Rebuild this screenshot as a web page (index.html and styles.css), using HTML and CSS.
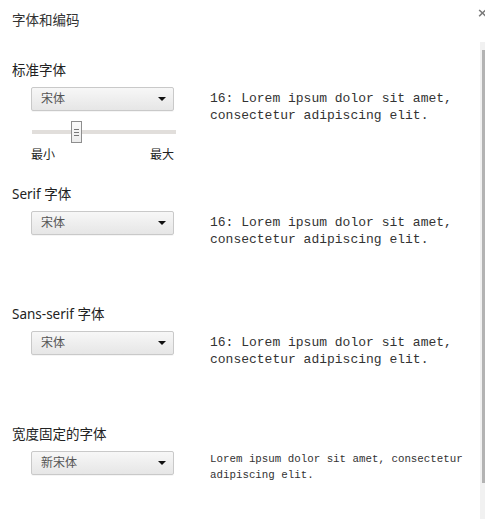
FILE: index.html
```html
<!DOCTYPE html>
<html>
<head>
<meta charset="utf-8">
<link rel="stylesheet" href="styles.css">
</head>
<body>
<div class="page">
  <div class="title">字体和编码</div>

  <div class="section first">
    <div class="label">标准字体</div>
    <div class="row">
      <div class="controls">
        <div class="select"><span>宋体</span><i class="arrow"></i></div>
        <div class="slider">
          <div class="track"></div>
          <div class="thumb"><span></span><span></span><span></span></div>
        </div>
        <div class="scale"><span>最小</span><span>最大</span></div>
      </div>
      <div class="preview">16: Lorem ipsum dolor sit amet,<br>consectetur adipiscing elit.</div>
    </div>
  </div>

  <div class="section">
    <div class="label">Serif 字体</div>
    <div class="row">
      <div class="controls">
        <div class="select"><span>宋体</span><i class="arrow"></i></div>
      </div>
      <div class="preview">16: Lorem ipsum dolor sit amet,<br>consectetur adipiscing elit.</div>
    </div>
  </div>

  <div class="section">
    <div class="label">Sans-serif 字体</div>
    <div class="row">
      <div class="controls">
        <div class="select"><span>宋体</span><i class="arrow"></i></div>
      </div>
      <div class="preview">16: Lorem ipsum dolor sit amet,<br>consectetur adipiscing elit.</div>
    </div>
  </div>

  <div class="section last">
    <div class="label">宽度固定的字体</div>
    <div class="row">
      <div class="controls">
        <div class="select"><span>新宋体</span><i class="arrow"></i></div>
      </div>
      <div class="preview small">Lorem ipsum dolor sit amet, consectetur<br>adipiscing elit.</div>
    </div>
  </div>
</div>

<div class="close">×</div>
<div class="scrollbar"><div class="scroll-thumb"></div></div>
</body>
</html>
```

FILE: styles.css
```css
html, body {
  margin: 0;
  padding: 0;
  background: #ffffff;
}

body {
  font-family: "Noto Sans", "Noto Sans CJK SC", sans-serif;
  color: #222;
  overflow: hidden;
}

.page {
  padding: 12px 0 0 12px;
}

.title {
  font-size: 13.5px;
  line-height: 16px;
  height: 16px;
  color: #333;
}

.section {
  height: 120px;
}

.section.first {
  margin-top: 34px;
  height: 124px;
}

.section.last {
  height: auto;
}

.label {
  font-size: 13.5px;
  line-height: 16px;
  height: 16px;
  color: #222;
}

.row {
  display: flex;
  margin-top: 9px;
  padding-left: 19px;
}

.controls {
  width: 145px;
  flex: none;
}

.select {
  box-sizing: border-box;
  width: 143px;
  height: 24px;
  border: 1px solid #c9c9c9;
  border-radius: 2px;
  background: linear-gradient(#f7f7f7, #e6e6e6);
  box-shadow: 0 1px 0 rgba(0,0,0,0.04);
  display: flex;
  align-items: center;
  justify-content: space-between;
  padding: 0 7px 0 9px;
  font-size: 12px;
  color: #555;
}

.select span {
  line-height: 14px;
}

.arrow {
  width: 0;
  height: 0;
  border-left: 4px solid transparent;
  border-right: 4px solid transparent;
  border-top: 4px solid #111;
}

.slider {
  position: relative;
  height: 22px;
  margin-top: 10px;
  display: flex;
  align-items: center;
}

.track {
  margin-left: 1px;
  width: 144px;
  height: 4px;
  background: #e1dedb;
}

.thumb {
  position: absolute;
  left: 40px;
  top: 0;
  box-sizing: border-box;
  width: 11px;
  height: 22px;
  border: 1px solid #8e8e8e;
  background: linear-gradient(#fbfbfb, #ececec);
  display: flex;
  flex-direction: column;
  align-items: center;
  justify-content: center;
  gap: 2px;
}

.thumb span {
  display: block;
  width: 5px;
  height: 1px;
  background: #777;
}

.scale {
  display: flex;
  justify-content: space-between;
  width: 143px;
  margin-top: 5px;
  font-size: 12px;
  line-height: 14px;
  color: #222;
}

.preview {
  margin-left: 34px;
  padding-top: 3px;
  font-family: "Liberation Mono", monospace;
  font-size: 13px;
  line-height: 17px;
  color: #333;
  white-space: nowrap;
}

.preview.small {
  padding-top: 1px;
  font-size: 10.8px;
  line-height: 15.5px;
}

.close {
  position: fixed;
  left: 477px;
  top: 5px;
  font-family: "DejaVu Sans", sans-serif;
  font-size: 13px;
  font-weight: bold;
  line-height: 16px;
  color: #7a7a7a;
}

.scrollbar {
  position: fixed;
  left: 480px;
  top: 42px;
  width: 5px;
  height: 477px;
  background: #f1f1f1;
}

.scroll-thumb {
  margin-top: 8px;
  margin-left: 2px;
  width: 3px;
  height: 433px;
  background: #b3b3b3;
}
```
